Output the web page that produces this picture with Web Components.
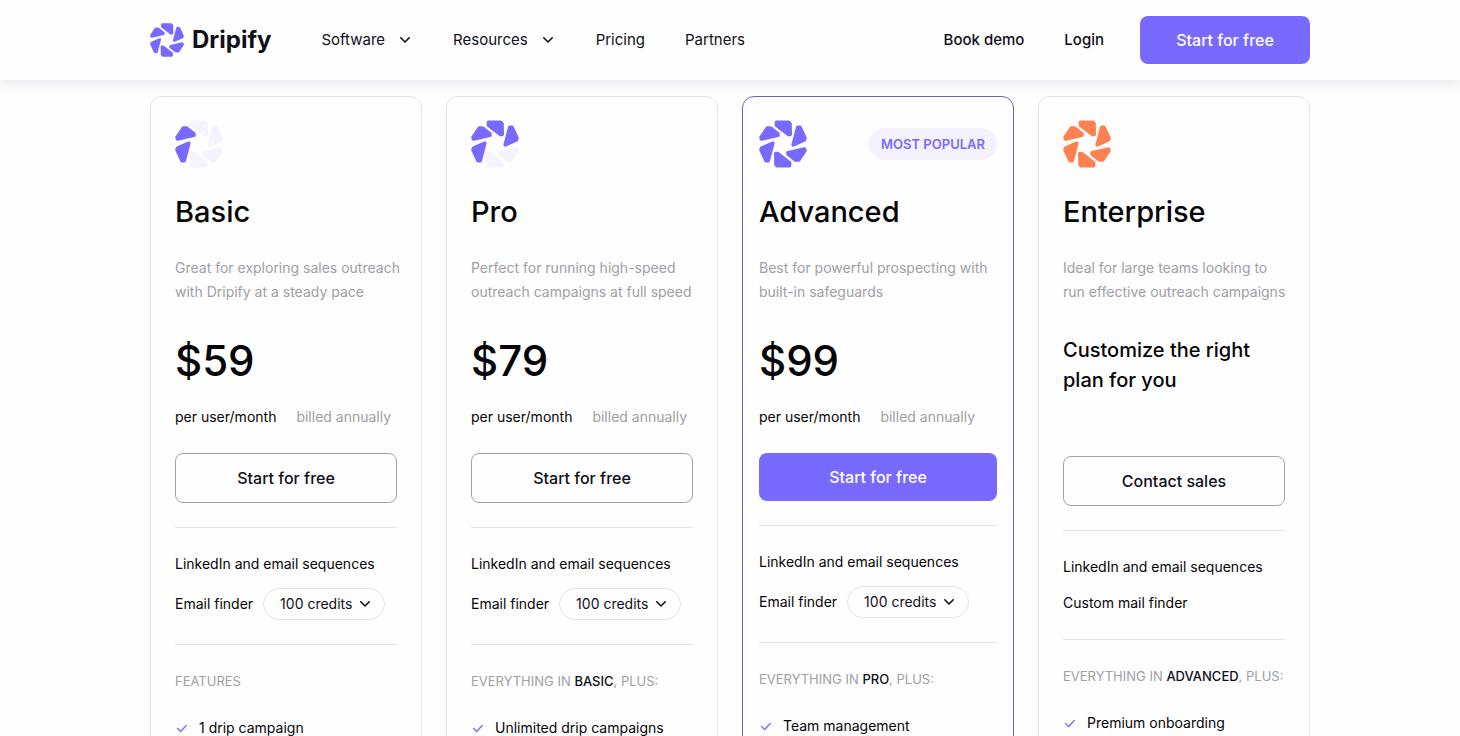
<!DOCTYPE html>
<html lang="en">
<head>
<meta charset="utf-8">
<meta name="viewport" content="width=device-width, initial-scale=1">
<title>Dripify Pricing</title>
<style>
  :root {
    --accent: #796aff;
    --ink: #100f1a;
    --muted: #a09fa6;
    --line: #e6e4ea;
  }
  * { box-sizing: border-box; }
  body {
    margin: 0;
    background: #fefdfe;
    color: #050507;
    font-family: Inter, "Open Sans", sans-serif;
    font-size: 14px;
    line-height: 24px;
  }
  main { padding: 16px 24px 48px; }
  plan-card b { color: var(--ink); font-weight: 500; }
</style>
</head>
<body>
<site-header>
  <nav-item slot="nav" menu>Software</nav-item>
  <nav-item slot="nav" menu>Resources</nav-item>
  <nav-item slot="nav">Pricing</nav-item>
  <nav-item slot="nav">Partners</nav-item>
  <nav-item slot="account" strong>Book demo</nav-item>
  <nav-item slot="account" strong>Login</nav-item>
  <action-button slot="cta" primary>Start for free</action-button>
</site-header>
<main>
  <plan-grid>
    <plan-card petals="2">
      <span slot="name">Basic</span>
      <span slot="summary">Great for exploring sales outreach<br>with Dripify at a steady pace</span>
      <plan-price slot="price">$59</plan-price>
      <action-button slot="cta">Start for free</action-button>
      <span slot="base">LinkedIn and email sequences</span>
      <credit-picker slot="base"></credit-picker>
      <span slot="heading">FEATURES</span>
      <feature-item slot="features">1 drip campaign</feature-item>
    </plan-card>
    <plan-card petals="4">
      <span slot="name">Pro</span>
      <span slot="summary">Perfect for running high-speed<br>outreach campaigns at full speed</span>
      <plan-price slot="price">$79</plan-price>
      <action-button slot="cta">Start for free</action-button>
      <span slot="base">LinkedIn and email sequences</span>
      <credit-picker slot="base"></credit-picker>
      <span slot="heading">EVERYTHING IN <b>BASIC</b>, PLUS:</span>
      <feature-item slot="features">Unlimited drip campaigns</feature-item>
    </plan-card>
    <plan-card petals="6" popular>
      <span slot="badge">MOST POPULAR</span>
      <span slot="name">Advanced</span>
      <span slot="summary">Best for powerful prospecting with<br>built-in safeguards</span>
      <plan-price slot="price">$99</plan-price>
      <action-button slot="cta" primary>Start for free</action-button>
      <span slot="base">LinkedIn and email sequences</span>
      <credit-picker slot="base"></credit-picker>
      <span slot="heading">EVERYTHING IN <b>PRO</b>, PLUS:</span>
      <feature-item slot="features">Team management</feature-item>
    </plan-card>
    <plan-card petals="6" custom>
      <span slot="name">Enterprise</span>
      <span slot="summary">Ideal for large teams looking to<br>run effective outreach campaigns</span>
      <span slot="price">Customize the right<br>plan for you</span>
      <action-button slot="cta">Contact sales</action-button>
      <span slot="base">LinkedIn and email sequences</span>
      <span slot="base">Custom mail finder</span>
      <span slot="heading">EVERYTHING IN <b>ADVANCED</b>, PLUS:</span>
      <feature-item slot="features">Premium onboarding</feature-item>
    </plan-card>
  </plan-grid>
</main>
<script>
const base = '*{box-sizing:border-box}';

function define(name, render) {
  customElements.define(name, class extends HTMLElement {
    constructor() { super(); this.attachShadow({ mode: 'open' }); }
    connectedCallback() {
      const t = document.createElement('template');
      t.innerHTML = render(this);
      this.shadowRoot.replaceChildren(t.content.cloneNode(true));
    }
  });
}

const chevron = '<svg class="chev" viewBox="0 0 16 8" width="16" height="8" aria-hidden="true"><path d="M3.8 1.8 8 6l4.2-4.2" fill="none" stroke="currentColor" stroke-width="1.6" stroke-linecap="round" stroke-linejoin="round"/></svg>';

/* Petals in fill order: the plan tier decides how many are solid. */
const petals = [
  'M13.8 23.2 2.5 28.2 2 29.7 7 40.7H9.2Z',
  'M8.3 8H11.3L19 14V15.2L2.6 19 2 17.6Z',
  'M17.5 2.3H29.8L31 3.5 31.2 14.5H29.5L17.3 5Z',
  'M38.8 7.3H41L46 18.3 45.5 19.8 34.2 24.8Z',
  'M39.7 40H36.7L29 34V32.8L45.4 29 46 30.4Z',
  'M30.5 45.7H18.2L17 44.5 16.8 33.5H18.5L30.7 43Z'
];
define('drip-mark', el => {
  const n = Number(el.getAttribute('filled') || 6);
  return `<style>:host{display:block;color:var(--accent)}svg{display:block;width:100%}
    path{fill:currentColor;stroke:currentColor;stroke-width:3.6;stroke-linejoin:round}.off{color:#f5f3ff}</style>
    <svg viewBox="0 0 48 48" aria-hidden="true">${petals.map((d, i) => `<path class="${i < n ? 'on' : 'off'}" d="${d}"/>`).reverse().join('')}</svg>`;
});

define('nav-item', el => `<style>${base}
  :host{display:block}
  a{display:flex;align-items:center;gap:12px;color:var(--ink);text-decoration:none;font-size:15px;line-height:24px}
  :host([strong]) a{font-weight:500}
  .chev{display:block}
  </style><a href="#"><slot></slot>${el.hasAttribute('menu') ? chevron : ''}</a>`);

define('action-button', () => `<style>${base}
  :host{display:block}
  button{display:block;width:100%;padding:12px 16px;border:1px solid #a3a2a8;border-radius:8px;background:transparent;
    color:var(--ink);font:500 16px/24px Inter,sans-serif;cursor:pointer}
  :host([primary]) button{border:0;background:var(--accent);color:#fff}
  </style><button type="button"><slot></slot></button>`);

define('site-header', () => `<style>${base}
  :host{display:block;position:sticky;top:0;z-index:2;background:#fefefe;box-shadow:0 2px 12px rgba(40,30,60,.12)}
  header{display:flex;align-items:center;max-width:1208px;margin:0 auto;padding:16px 24px}
  .brand{display:flex;align-items:center;gap:8px;color:var(--ink);text-decoration:none;font-size:24px;font-weight:700;line-height:32px}
  drip-mark{width:34px}
  nav{display:flex;gap:40px;margin-left:50px}
  .account{display:flex;gap:40px;margin-left:auto}
  .cta{width:170px;margin-left:36px}
  </style>
  <header>
    <a class="brand" href="#"><drip-mark></drip-mark><span>Dripify</span></a>
    <nav aria-label="Main"><slot name="nav"></slot></nav>
    <div class="account"><slot name="account"></slot></div>
    <div class="cta"><slot name="cta"></slot></div>
  </header>`);

define('plan-grid', () => `<style>
  :host{display:grid;grid-template-columns:repeat(auto-fit,minmax(260px,1fr));gap:24px;max-width:1160px;margin:0 auto}
  </style><slot></slot>`);

define('plan-price', () => `<style>
  :host{display:block}
  .amount{font-size:42px;line-height:56px;font-weight:500}
  .terms{display:flex;gap:20px;margin-top:16px;line-height:24px}
  .muted{color:var(--muted)}
  </style>
  <div class="amount"><slot></slot></div>
  <div class="terms"><span>per user/month</span><span class="muted">billed annually</span></div>`);

define('credit-picker', () => `<style>${base}
  :host{display:block}
  label{display:flex;align-items:center;gap:10px}
  .pill{display:grid;align-items:center;width:122px;color:var(--ink)}
  .pill>*{grid-area:1/1}
  select{appearance:none;width:100%;height:32px;padding:0 16px;border:1px solid var(--line);border-radius:16px;
    background:transparent;color:inherit;font:400 14px/24px Inter,sans-serif}
  .chev{justify-self:end;margin-right:12px;pointer-events:none}
  </style>
  <label><span>Email finder</span><span class="pill"><select><option>100 credits</option></select>${chevron}</span></label>`);

define('feature-item', () => `<style>
  :host{display:flex;align-items:center;gap:10px;line-height:24px}
  svg{flex:none}
  </style>
  <svg viewBox="0 0 14 14" width="14" height="14" aria-hidden="true"><path d="M2.6 7.6 5.6 10.4l5.6-5.8" fill="none" stroke="var(--accent)" stroke-width="1.4" stroke-linecap="round" stroke-linejoin="round"/></svg>
  <span><slot></slot></span>`);

define('plan-card', el => `<style>${base}
  :host{display:block;padding:23px 24px 48px;border:1px solid var(--line);border-radius:12px;background:#fefefe}
  :host([popular]){padding-left:16px;padding-right:16px;border-color:#6f61c6}
  .top{display:flex;align-items:center;justify-content:space-between}
  drip-mark{width:48px}
  :host([custom]) drip-mark{--accent:#ff8152}
  .badge{padding:4px 12px;border-radius:16px;background:#f4f2ff;color:var(--accent);font-size:13px;font-weight:600}
  h2{margin:24px 0 0;font-size:29px;line-height:40px;font-weight:500}
  .summary{margin-top:24px;color:var(--muted);white-space:nowrap}
  .price{height:96px;margin-top:29px}
  :host([custom]) .price{height:99px;padding-top:2px;font-size:20px;line-height:30px;font-weight:500}
  .cta{margin-top:24px}
  hr{margin:24px 0;border:0;border-top:1px solid var(--line)}
  .base{display:grid;gap:12px}
  .heading{color:var(--muted);font-size:13px;white-space:nowrap}
  .features{display:grid;gap:12px;margin-top:23px}
  </style>
  <div class="top"><drip-mark filled="${el.getAttribute('petals')}"></drip-mark>${el.hasAttribute('popular') ? '<span class="badge"><slot name="badge"></slot></span>' : ''}</div>
  <h2><slot name="name"></slot></h2>
  <div class="summary"><slot name="summary"></slot></div>
  <div class="price"><slot name="price"></slot></div>
  <div class="cta"><slot name="cta"></slot></div>
  <hr>
  <div class="base"><slot name="base"></slot></div>
  <hr>
  <div class="heading"><slot name="heading"></slot></div>
  <div class="features"><slot name="features"></slot></div>`);
</script>
</body>
</html>
